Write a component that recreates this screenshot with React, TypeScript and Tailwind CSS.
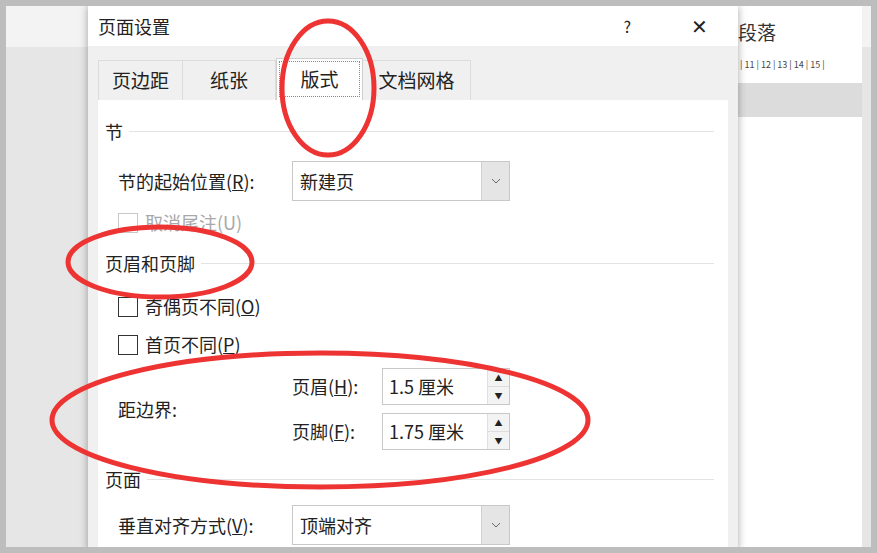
import React from "react";

const F = { fontFamily: '"Noto Sans CJK SC", "Noto Sans", sans-serif' };

function Select({ value, w }: { value: string; w: string }) {
  return (
    <div className={`flex h-[40px] ${w} border border-[#c8c8c8] bg-white`}>
      <div className="flex-1 flex items-center pl-[7px] text-[18px] text-[#222]">{value}</div>
      <div className="w-[28px] bg-[#e5e5e5] border-l border-[#d0d0d0] flex items-center justify-center">
        <svg width="10" height="6" viewBox="0 0 10 6"><path d="M1 1l4 4 4-4" fill="none" stroke="#666" strokeWidth="1" /></svg>
      </div>
    </div>
  );
}

function Spin({ value }: { value: string }) {
  return (
    <div className="flex h-[37px] w-[128px] border border-[#c8c8c8] bg-white">
      <div className="flex-1 flex items-center pl-[6px] text-[18px] text-[#222]">{value}</div>
      <div className="w-[22px] flex flex-col border-l border-[#e0e0e0]">
        <div className="flex-1 flex items-center justify-center bg-[#f3f3f3] text-[8px] text-[#222]">▲</div>
        <div className="flex-1 flex items-center justify-center bg-[#f3f3f3] border-t border-[#ddd] text-[8px] text-[#222]">▼</div>
      </div>
    </div>
  );
}

function Section({ title }: { title: string }) {
  return (
    <div className="flex items-center gap-[6px] text-[18px] text-[#222]">
      <span>{title}</span>
      <div className="flex-1 h-px bg-[#e3e3e3]" />
    </div>
  );
}

function Check({ label, disabled }: { label: React.ReactNode; disabled?: boolean }) {
  return (
    <div className={`flex items-center gap-[7px] text-[18px] ${disabled ? "text-[#a8a8a8]" : "text-[#222]"}`}>
      <div className={`w-[20px] h-[20px] border ${disabled ? "border-[#c8c8c8]" : "border-[#333]"} bg-white`} />
      <span>{label}</span>
    </div>
  );
}

export default function App() {
  return (
    <div style={F} className="relative w-[877px] h-[553px] overflow-hidden border-[6px] border-[#bdbdbd] bg-[#e6e6e6]">
      <div className="flex flex-col h-full">
        <div className="h-[41px] bg-[#f3f3f3] flex justify-end items-end">
          <div className="w-[124px] mr-[9px] h-[41px] bg-white flex items-end pb-[1px] text-[19px] text-[#333]">段落</div>
        </div>
        <div className="flex-1 flex justify-end">
          <div className="w-[124px] mr-[9px] flex flex-col">
            <div className="h-[36px] bg-white flex items-center text-[9px] text-[#444] pl-[2px]">| 11 | 12 | 13 | 14 | 15 |</div>
            <div className="h-[34px] bg-[#dcdcdc]" />
            <div className="flex-1 bg-white" />
          </div>
        </div>
      </div>

      <div className="absolute left-[82px] top-0 w-[650px] h-[545px] bg-[#f0f0f0] shadow-[0_0_8px_rgba(0,0,0,0.35)] flex flex-col">
        <div className="h-[40px] bg-white flex items-center pl-[10px] pr-[30px] text-[18px] text-[#222]">
          <span className="flex-1">页面设置</span>
          <span className="mr-[60px] text-[16px]">?</span>
          <span className="text-[20px] font-light">✕</span>
        </div>
        <div className="px-[10px] pt-[14px] flex flex-col flex-1">
          <div className="flex h-[40px] items-end text-[19px] text-[#222]">
            <div className="h-[40px] w-[85px] flex items-center justify-center bg-[#f0f0f0] border border-[#dcdcdc] border-b-0">页边距</div>
            <div className="h-[40px] w-[93px] flex items-center justify-center bg-[#f0f0f0] border-r border-t border-[#dcdcdc]">纸张</div>
            <div className="h-[42px] w-[87px] flex items-center justify-center bg-white border border-[#cfcfcf] border-b-0 outline-1 outline-dotted outline-[#888] -outline-offset-4">版式</div>
            <div className="h-[40px] w-[108px] flex items-center justify-center bg-[#f0f0f0] border-r border-t border-[#dcdcdc]">文档网格</div>
          </div>
          <div className="flex-1 bg-white pl-[7px] pt-[18px] pr-[14px] flex flex-col">
            <Section title="节" />
            <div className="flex items-center mt-[16px] pl-[13px]">
              <span className="w-[174px] text-[18px] text-[#222]">节的起始位置(<u>R</u>):</span>
              <Select value="新建页" w="w-[218px]" />
            </div>
            <div className="mt-[8px] pl-[13px]"><Check disabled label="取消尾注(U)" /></div>
            <div className="mt-[14px]"><Section title="页眉和页脚" /></div>
            <div className="mt-[16px] pl-[13px]"><Check label={<>奇偶页不同(<u>O</u>)</>} /></div>
            <div className="mt-[11px] pl-[13px]"><Check label={<>首页不同(<u>P</u>)</>} /></div>
            <div className="flex items-center mt-[10px] pl-[13px]">
              <span className="w-[174px] text-[18px] text-[#222]">距边界:</span>
              <div className="flex flex-col gap-[8px]">
                <div className="flex items-center">
                  <span className="w-[90px] text-[18px] text-[#222]">页眉(<u>H</u>):</span>
                  <Spin value="1.5 厘米" />
                </div>
                <div className="flex items-center">
                  <span className="w-[90px] text-[18px] text-[#222]">页脚(<u>F</u>):</span>
                  <Spin value="1.75 厘米" />
                </div>
              </div>
            </div>
            <div className="mt-[16px]"><Section title="页面" /></div>
            <div className="flex items-center mt-[12px] pl-[13px]">
              <span className="w-[174px] text-[18px] text-[#222]">垂直对齐方式(<u>V</u>):</span>
              <Select value="顶端对齐" w="w-[218px]" />
            </div>
          </div>
        </div>
      </div>

      <svg className="absolute left-[-6px] top-[-6px] pointer-events-none" width="877" height="553">
        <g fill="none" stroke="#ee3333" strokeWidth="5">
          <ellipse cx="328" cy="88" rx="46" ry="67" />
          <ellipse cx="160" cy="262" rx="92" ry="35" />
          <ellipse cx="320" cy="420" rx="268" ry="67" />
        </g>
      </svg>
    </div>
  );
}
